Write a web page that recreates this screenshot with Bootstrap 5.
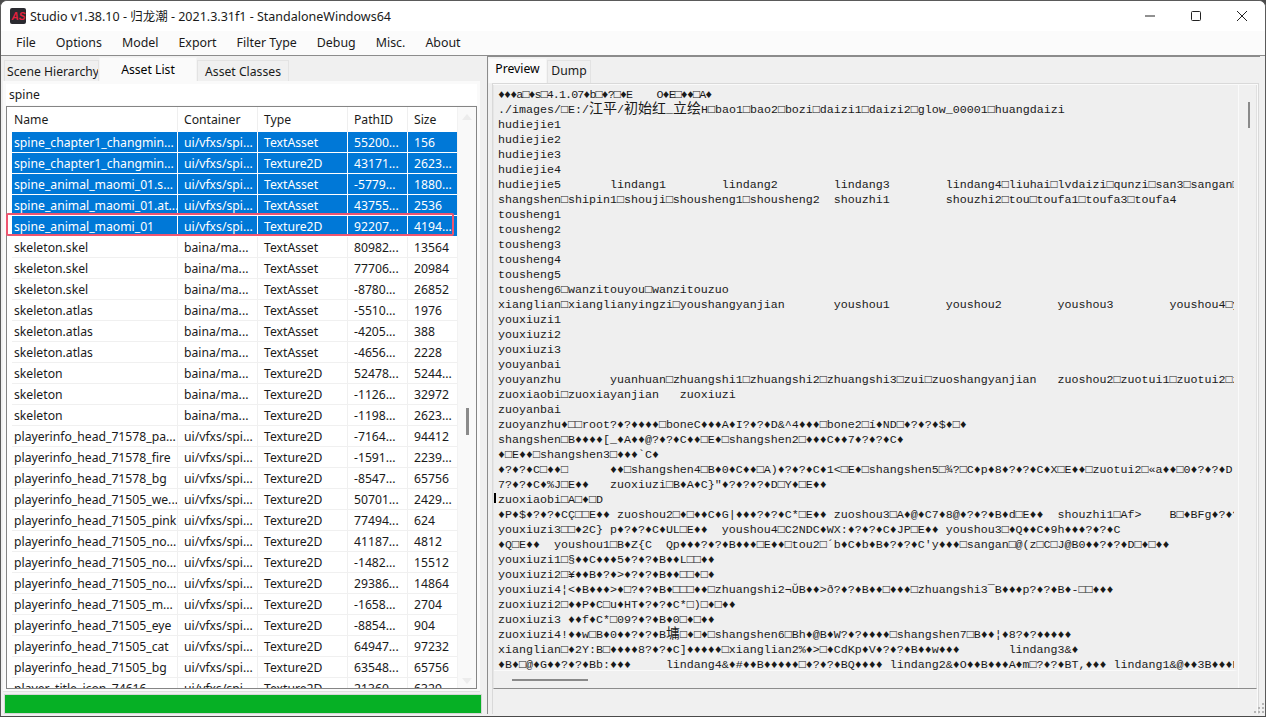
<!DOCTYPE html>
<html lang="zh">
<head>
<meta charset="utf-8">
<title>Studio</title>
<link rel="stylesheet" href="https://cdn.jsdelivr.net/npm/bootstrap@5.3.0/dist/css/bootstrap.min.css">
<style>
html,body{height:717px;overflow:hidden;background:#4a4a4a}
body{font:12.2px/1.2 "Noto Sans","Noto Sans CJK SC",sans-serif;color:#1a1a1a}
.win{height:716px;width:1266px;background:#f0f0f0;border:1px solid #5a5a5a;border-width:1px 1px 0 1px;border-radius:7px 7px 0 0;overflow:hidden;display:flex;flex-direction:column;position:relative}
.tbar{height:30px;background:#fff;flex:none;padding-left:9px}
.tbar .ttl{font-size:12.5px}
.wbtn{width:46px;height:30px}
.mbar{height:25px;flex:none;background:#fbfbfb;border-bottom:1px solid #8c8c8c;padding:0 0 0 15px;gap:20px}
.mbar .nav-link{color:#1a1a1a;padding:0;font-size:12.4px}
.work{flex:1;min-height:0;padding:0 5px 2px 2px;gap:5px}
.lpane{width:479px;flex:none;margin-top:1px}
.rpane{flex:1;min-width:0;border-left:1px solid #8c8c8c}
.tabsx{border:0;height:24px;flex:none;align-items:flex-end;padding-left:1px}
.tabsx .nav-link{color:#1a1a1a;background:#f0f0f0;border:1px solid #e3e3e3;border-bottom:0;border-radius:0;padding:0;height:21px;line-height:21px;font-size:12.2px;text-align:center;margin:0}
.tabsx .nav-link.active{background:#fafafa;height:24px;line-height:23px;border-color:#f4f4f4}
.t1{width:95px;overflow:hidden;white-space:nowrap;text-align:left!important;padding-left:2px!important}.t2{width:98px}.t3{width:92px}.t4{width:59px}.t5{width:44px}
.lbody{flex:1;min-height:0;background:#fafafa;padding:3px 3px 2px 3px;border-bottom:1px solid #e0e0e0;margin-right:2px}
.srch{height:21px;flex:none;background:#fff;border:0;border-radius:0;font-size:12.2px;padding:0 3px;color:#1a1a1a;box-shadow:none;min-height:0;margin-bottom:1px}
.lframe{flex:1;min-height:0;border:1px solid #858585;background:#fff;overflow:hidden}
.lscroll{width:19px;flex:none;background:#f9f9f9;border-left:1px solid #f2f2f2}
.lthumb{width:3px;height:27px;background:#8a8a8a;margin:288px 0 0 8px}
.aup,.adn{width:0;height:0;border-left:5px solid transparent;border-right:5px solid transparent;margin-left:4px}
.aup{border-bottom:6px solid #ececec;margin-top:7px}
.adn{border-top:6px solid #ececec;margin-top:243px}
.tblwrap{flex:1;min-width:0;padding-left:5px;overflow:hidden}
.assets{table-layout:fixed;width:447px;margin:0;border-collapse:separate;border-spacing:0;font-size:12.2px}
.assets th,.assets td{padding:1px 0 0 6px;height:21px;line-height:19px;white-space:nowrap;overflow:hidden;font-weight:400;border:0;border-right:1px solid #f0f0f0;border-bottom:1px solid #f0f0f0;box-shadow:none;background:#fff;color:#1a1a1a;vertical-align:middle}
.assets th:first-child,.assets td:first-child{padding-left:2px}
.assets th{height:25px;border-color:#efefef;border-bottom:0;padding:0 0 1px 6px}
.assets tr.sel td{background:#0078d7;color:#fff;border-color:#fff}
.mkbox{position:absolute;left:3px;top:132px;width:448px;height:23px;border:2px solid #ee5570;border-radius:2px;pointer-events:none}
.hl{position:relative}
.pbar{height:20px;flex:none;border-radius:0;background:#e6e6e6;border:1px solid #d6d6d6;margin:2px 0 0 1px}
.pbar .progress-bar{background:#06b025}
.rpad{flex:1;min-height:0;border-top:1px solid #8c8c8c}
.rtabs{padding-left:0;height:26px}
.rtabs .nav-link{height:23px;line-height:20px}
.rtabs .nav-link.active{height:25px;line-height:20px;background:#fafafa}
.page{flex:1;min-height:0;border:1px solid #d9d9d9;border-bottom:0;background:#fafafa;padding:1px 1px 0 0;margin-left:4px;margin-right:1px;display:flex;flex-direction:column}
.tbox{height:604px;flex:none;border-left:1px solid #e6e6e6;border-bottom:1px solid #8c8c8c;border-right:1px solid #e0e0e0;background:#f0f0f0}
.txtcol{flex:1;min-width:0;display:flex;flex-direction:column;border-right:1px solid #fafafa}
.dump{flex:1;min-height:0;margin:0;overflow:hidden;padding:3px 0 0 4px;font:11.67px/15px "Liberation Mono","Noto Sans CJK SC",monospace;color:#1a1a1a;tab-size:16;white-space:pre;background:#efefef;border-right:4px solid #efefef;border-bottom:1px solid #fafafa;position:relative}
.tight{letter-spacing:-.9px}
.cjk{font-size:14px;font-family:"Noto Sans CJK SC",sans-serif;line-height:0}
.hscr{height:17px;flex:none;background:#f0f0f0;padding:8px 0 0 18px}
.hthumb{width:76px;height:2px;background:#8a8a8a}
.vscr{width:17px;flex:none;background:#f0f0f0;padding:17px 0 0 9px}
.vthumb{width:2px;height:26px;background:#8a8a8a}
.caret{position:absolute;left:0;top:408px;width:2px;height:10px;background:#000}
.rfoot{height:29px;flex:none;background:#f0f0f0}
.grip{position:absolute;right:1px;bottom:3px}
</style>
</head>
<body>
<div class="win">
  <div class="tbar d-flex align-items-center">
    <svg width="16" height="16" viewBox="0 0 16 16"><rect width="16" height="16" rx="2" fill="#2a2a30"/><text x="1.5" y="12" font-family="Liberation Sans" font-weight="700" font-style="italic" font-size="10" fill="#e5213f">AS</text></svg>
    <span class="ttl ms-1">Studio v1.38.10 - 归龙潮 - 2021.3.31f1 - StandaloneWindows64</span>
    <div class="d-flex ms-auto">
      <div class="wbtn d-flex align-items-center justify-content-center"><svg width="10" height="10" viewBox="0 0 10 10"><path d="M0 5h10" stroke="#222" fill="none"/></svg></div>
      <div class="wbtn d-flex align-items-center justify-content-center"><svg width="10" height="10" viewBox="0 0 10 10"><rect x=".5" y=".5" width="9" height="9" rx="1" stroke="#222" fill="none"/></svg></div>
      <div class="wbtn d-flex align-items-center justify-content-center"><svg width="10" height="10" viewBox="0 0 10 10"><path d="M0 0l10 10M10 0L0 10" stroke="#222" fill="none"/></svg></div>
    </div>
  </div>
  <nav class="nav mbar align-items-center">
    <a class="nav-link" href="#">File</a><a class="nav-link" href="#">Options</a><a class="nav-link" href="#">Model</a><a class="nav-link" href="#">Export</a><a class="nav-link" href="#">Filter Type</a><a class="nav-link" href="#">Debug</a><a class="nav-link" href="#">Misc.</a><a class="nav-link" href="#">About</a>
  </nav>
  <div class="work d-flex">
    <div class="lpane d-flex flex-column">
      <ul class="nav nav-tabs tabsx">
        <li class="nav-item"><a class="nav-link t1" href="#">Scene Hierarchy</a></li>
        <li class="nav-item"><a class="nav-link t2 active" href="#">Asset List</a></li>
        <li class="nav-item"><a class="nav-link t3" href="#">Asset Classes</a></li>
      </ul>
      <div class="lbody d-flex flex-column hl">
        <input class="form-control srch" value="spine">
        <div class="lframe d-flex">
          <div class="tblwrap">
            <table class="table assets">
              <colgroup><col style="width:166px"><col style="width:80px"><col style="width:90px"><col style="width:60px"><col style="width:51px"></colgroup>
              <thead><tr><th>Name</th><th>Container</th><th>Type</th><th>PathID</th><th>Size</th></tr></thead>
              <tbody>
                <tr class="sel"><td>spine_chapter1_changmin...</td><td>ui/vfxs/spi...</td><td>TextAsset</td><td>55200...</td><td>156</td></tr>
                <tr class="sel"><td>spine_chapter1_changmin...</td><td>ui/vfxs/spi...</td><td>Texture2D</td><td>43171...</td><td>2623...</td></tr>
                <tr class="sel"><td>spine_animal_maomi_01.s...</td><td>ui/vfxs/spi...</td><td>TextAsset</td><td>-5779...</td><td>1880...</td></tr>
                <tr class="sel"><td>spine_animal_maomi_01.at...</td><td>ui/vfxs/spi...</td><td>TextAsset</td><td>43755...</td><td>2536</td></tr>
                <tr class="sel"><td>spine_animal_maomi_01</td><td>ui/vfxs/spi...</td><td>Texture2D</td><td>92207...</td><td>4194...</td></tr>
                <tr><td>skeleton.skel</td><td>baina/ma...</td><td>TextAsset</td><td>80982...</td><td>13564</td></tr>
                <tr><td>skeleton.skel</td><td>baina/ma...</td><td>TextAsset</td><td>77706...</td><td>20984</td></tr>
                <tr><td>skeleton.skel</td><td>baina/ma...</td><td>TextAsset</td><td>-8780...</td><td>26852</td></tr>
                <tr><td>skeleton.atlas</td><td>baina/ma...</td><td>TextAsset</td><td>-5510...</td><td>1976</td></tr>
                <tr><td>skeleton.atlas</td><td>baina/ma...</td><td>TextAsset</td><td>-4205...</td><td>388</td></tr>
                <tr><td>skeleton.atlas</td><td>baina/ma...</td><td>TextAsset</td><td>-4656...</td><td>2228</td></tr>
                <tr><td>skeleton</td><td>baina/ma...</td><td>Texture2D</td><td>52478...</td><td>5244...</td></tr>
                <tr><td>skeleton</td><td>baina/ma...</td><td>Texture2D</td><td>-1126...</td><td>32972</td></tr>
                <tr><td>skeleton</td><td>baina/ma...</td><td>Texture2D</td><td>-1198...</td><td>2623...</td></tr>
                <tr><td>playerinfo_head_71578_pa...</td><td>ui/vfxs/spi...</td><td>Texture2D</td><td>-7164...</td><td>94412</td></tr>
                <tr><td>playerinfo_head_71578_fire</td><td>ui/vfxs/spi...</td><td>Texture2D</td><td>-1591...</td><td>2239...</td></tr>
                <tr><td>playerinfo_head_71578_bg</td><td>ui/vfxs/spi...</td><td>Texture2D</td><td>-8547...</td><td>65756</td></tr>
                <tr><td>playerinfo_head_71505_we...</td><td>ui/vfxs/spi...</td><td>Texture2D</td><td>50701...</td><td>2429...</td></tr>
                <tr><td>playerinfo_head_71505_pink</td><td>ui/vfxs/spi...</td><td>Texture2D</td><td>77494...</td><td>624</td></tr>
                <tr><td>playerinfo_head_71505_no...</td><td>ui/vfxs/spi...</td><td>Texture2D</td><td>41187...</td><td>4812</td></tr>
                <tr><td>playerinfo_head_71505_no...</td><td>ui/vfxs/spi...</td><td>Texture2D</td><td>-1482...</td><td>15512</td></tr>
                <tr><td>playerinfo_head_71505_no...</td><td>ui/vfxs/spi...</td><td>Texture2D</td><td>29386...</td><td>14864</td></tr>
                <tr><td>playerinfo_head_71505_m...</td><td>ui/vfxs/spi...</td><td>Texture2D</td><td>-1658...</td><td>2704</td></tr>
                <tr><td>playerinfo_head_71505_eye</td><td>ui/vfxs/spi...</td><td>Texture2D</td><td>-8854...</td><td>904</td></tr>
                <tr><td>playerinfo_head_71505_cat</td><td>ui/vfxs/spi...</td><td>Texture2D</td><td>64947...</td><td>97232</td></tr>
                <tr><td>playerinfo_head_71505_bg</td><td>ui/vfxs/spi...</td><td>Texture2D</td><td>63548...</td><td>65756</td></tr>
                <tr><td>player_title_icon_74616</td><td>ui/vfxs/spi...</td><td>Texture2D</td><td>21360...</td><td>6329</td></tr>
              </tbody>
            </table>
          </div>
          <div class="lscroll"><div class="aup"></div><div class="lthumb"></div><div class="adn"></div></div>
        </div>
        <div class="mkbox"></div>
      </div>
      <div class="progress pbar"><div class="progress-bar w-100"></div></div>
    </div>
    <div class="rpane d-flex flex-column">
      <div class="rpad d-flex flex-column">
      <ul class="nav nav-tabs tabsx rtabs">
        <li class="nav-item"><a class="nav-link t4 active" href="#">Preview</a></li>
        <li class="nav-item"><a class="nav-link t5" href="#">Dump</a></li>
      </ul>
      <div class="page">
        <div class="tbox d-flex">
          <div class="txtcol">
<pre class="dump"><span class="caret"></span><span class="tight">♦♦♦a□♦s□4.1.07♦b□♦?□♦E    O♦E□♦♦□A♦</span>
./images/□E:/<span class="cjk">江平</span>/<span class="cjk">初始红</span>_<span class="cjk">立绘</span>H□bao1□bao2□bozi□daizi1□daizi2□glow_00001□huangdaizi
hudiejie1
hudiejie2
hudiejie3
hudiejie4
hudiejie5	lindang1	lindang2	lindang3	lindang4□liuhai□lvdaizi□qunzi□san3□sangan□
shangshen□shipin1□shouji□shousheng1□shousheng2	shouzhi1	shouzhi2□tou□toufa1□toufa3□toufa4
tousheng1
tousheng2
tousheng3
tousheng4
tousheng5
tousheng6□wanzitouyou□wanzitouzuo
xianglian□xianglianyingzi□youshangyanjian	youshou1	youshou2	youshou3	youshou4□y
youxiuzi1
youxiuzi2
youxiuzi3
youyanbai
youyanzhu	yuanhuan□zhuangshi1□zhuangshi2□zhuangshi3□zui□zuoshangyanjian	zuoshou2□zuotui1□zuotui2□z
zuoxiaobi□zuoxiayanjian   zuoxiuzi
zuoyanbai
zuoyanzhu♦□□root?♦?♦♦♦♦□boneC♦♦♦A♦I?♦?♦D&amp;^4♦♦♦□bone2□í♦ND□♦?♦?♦$♦□♦
shangshen□B♦♦♦♦[_♦A♦♦@?♦?♦C♦♦□E♦□shangshen2□♦♦♦C♦♦7♦?♦?♦C♦
♦□E♦♦□shangshen3□♦♦♦`C♦
♦?♦?♦C□♦♦□	♦♦□shangshen4□B♦0♦C♦♦□A)♦?♦?♦C♦1&lt;□E♦□shangshen5□¾?□C♦p♦8♦?♦?♦C♦X□E♦♦□zuotui2□«a♦♦□0♦?♦?♦D;)
7?♦?♦C♦%J□E♦♦	zuoxiuzi□B♦A♦C}"♦?♦?♦?♦D□Y♦□E♦♦
zuoxiaobi□A□♦□D
♦P♦$♦?♦?♦CÇ□□E♦♦ zuoshou2□♦□♦♦C♦G|♦♦♦?♦?♦C*□E♦♦ zuoshou3□A♦@♦C7♦8@♦?♦?♦B♦d□E♦♦  shouzhi1□Af&gt;	B□♦BFg♦?♦?
youxiuzi3□□♦2C} p♦?♦?♦C♦UL□E♦♦  youshou4□C2NDC♦WX:♦?♦?♦C♦JP□E♦♦ youshou3□♦Q♦♦C♦9h♦♦♦?♦?♦C
♦Q□E♦♦  youshou1□B♦Z{C  Qp♦♦♦?♦?♦B♦♦♦□E♦♦□tou2□´b♦C♦b♦B♦?♦?♦C'y♦♦♦□sangan□@(z□C□J@B0♦♦?♦?♦D□♦□♦♦
youxiuzi1□§♦♦C♦♦♦5♦?♦?♦B♦♦L□□♦♦
youxiuzi2□¥♦♦B♦?♦&gt;♦?♦?♦B♦♦□□♦□♦
youxiuzi4¦&lt;♦B♦♦♦&gt;♦□?♦?♦B♦□□□♦♦□zhuangshi2¬ŬB♦♦&gt;ð?♦?♦B♦♦□♦♦♦□zhuangshi3¯B♦♦♦p?♦?♦B♦-□□♦♦♦
zuoxiuzi2□♦♦P♦C□u♦HT♦?♦?♦C*□)□♦□♦♦
zuoxiuzi3 ♦♦f♦C*□09?♦?♦B♦0□♦□♦♦
zuoxiuzi4!♦♦w□B♦0♦♦?♦?♦B<span class="cjk">墉</span>□♦□♦□shangshen6□Bh♦@B♦W?♦?♦♦♦♦□shangshen7□B♦♦¦♦8?♦?♦♦♦♦♦
xianglian□♦2Y:B□♦♦♦♦8?♦?♦C]♦♦♦♦♦□xianglian2%♦&gt;□♦CdKp♦V♦?♦?♦B♦♦w♦♦♦       lindang3&amp;♦
♦B♦□@♦G♦♦?♦?♦Bb:♦♦♦     lindang4&amp;♦#♦♦B♦♦♦♦♦□♦?♦?♦BQ♦♦♦♦ lindang2&amp;♦O♦♦B♦♦♦A♦m□?♦?♦BT,♦♦♦ lindang1&amp;@♦♦3B♦♦♦B</pre>
            <div class="hscr"><div class="hthumb"></div></div>
          </div>
          <div class="vscr"><div class="vthumb"></div></div>
        </div>
        <div class="rfoot"></div>
      </div>
      </div>
    </div>
  </div>
  <svg class="grip" width="10" height="10" viewBox="0 0 10 10"><g fill="#b5b5b5"><rect x="8" y="0" width="2" height="2"/><rect x="4" y="4" width="2" height="2"/><rect x="8" y="4" width="2" height="2"/><rect x="0" y="8" width="2" height="2"/><rect x="4" y="8" width="2" height="2"/><rect x="8" y="8" width="2" height="2"/></g></svg>
</div>
<script src="https://cdn.jsdelivr.net/npm/bootstrap@5.3.0/dist/js/bootstrap.bundle.min.js"></script>
</body>
</html>
